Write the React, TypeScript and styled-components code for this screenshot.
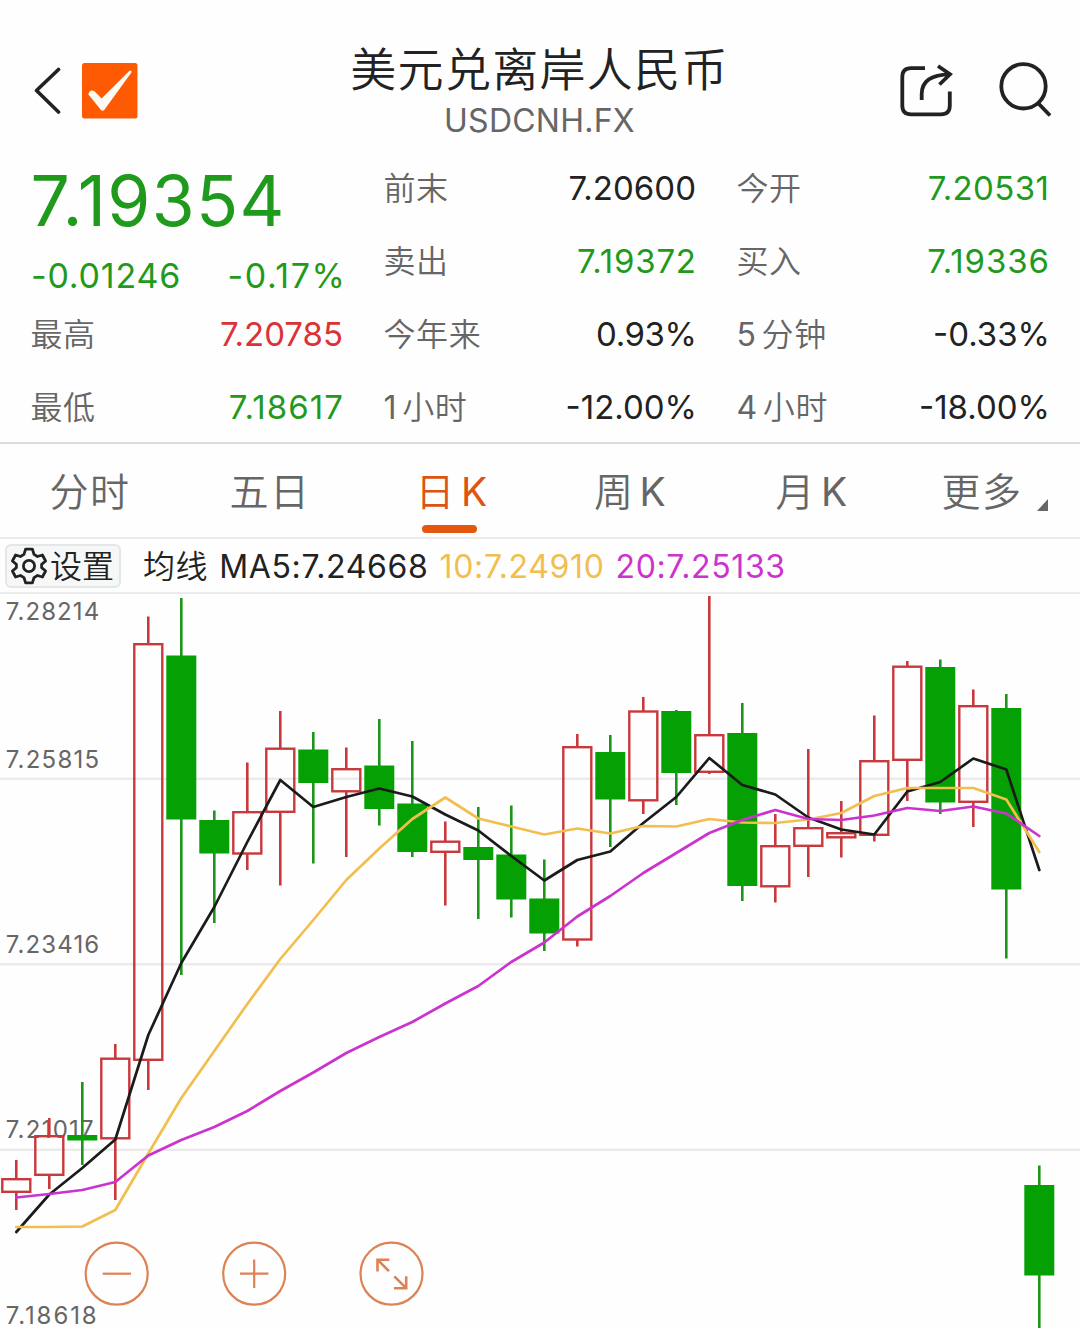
import React from "react";
import styled, { createGlobalStyle } from "styled-components";

const GREEN = "#1f9a1c";
const RED = "#dc3236";
const INK = "#222222";
const GREY = "#666666";

const GlobalStyle = createGlobalStyle`
  * { box-sizing: border-box; }
  body {
    margin: 0;
    background: #fefefe;
    font-family: Inter, "Noto Sans CJK SC", sans-serif;
    -webkit-font-smoothing: antialiased;
  }
`;

const Page = styled.main`
  width: 1080px;
  height: 1328px;
  overflow: hidden;
  display: flex;
  flex-direction: column;
  background: #fefefe;
  color: ${INK};
  white-space: nowrap;
`;

const Header = styled.header`
  height: 152px;
  padding: 28px 28px 0 32px;
  display: grid;
  grid-template-columns: 200px 1fr 155px;
  align-items: center;
`;

const HeaderGroup = styled.div<{ $gap: number; $end?: boolean }>`
  display: flex;
  align-items: center;
  gap: ${(p) => p.$gap}px;
  justify-content: ${(p) => (p.$end ? "flex-end" : "flex-start")};
`;

const TitleBlock = styled.div`
  display: flex;
  flex-direction: column;
  align-items: center;
  padding: 2px 50px 0 0;
`;

const Title = styled.h1`
  margin: 0;
  font-size: 46px;
  font-weight: 350;
  line-height: 56px;
  letter-spacing: 1.3px;
`;

const Ticker = styled.div`
  font-size: 32px;
  line-height: 40px;
  letter-spacing: 0.25px;
  color: ${GREY};
  margin-top: 4px;
`;

const Quotes = styled.section`
  height: 292px;
  padding: 0 31px;
  display: grid;
  grid-template-columns: repeat(3, 312px);
  justify-content: space-between;
  border-bottom: 2px solid #dcdcdc;
`;

const QuoteColumn = styled.div`
  display: flex;
  flex-direction: column;
`;

const QuoteRow = styled.div`
  height: 73px;
  display: flex;
  align-items: center;
  justify-content: space-between;
  font-size: 32px;
`;

const Label = styled.span`
  color: ${GREY};
  font-weight: 350;
  letter-spacing: 0.6px;
  margin-left: -0.5px;
  padding-bottom: 6px;
`;

const Count = styled.span`
  font-weight: 400;
  margin-right: 5px;
`;

const Value = styled.span<{ $color?: string; $spacing: number; $percent: boolean }>`
  color: ${(p) => p.$color ?? INK};
  font-size: 33px;
  padding-bottom: 1px;
  letter-spacing: ${(p) => p.$spacing}px;
  margin-right: ${(p) => -p.$spacing - (p.$percent ? 1 : 0)}px;
`;

const LastPrice = styled.div`
  height: 97px;
  margin-left: -0.5px;
  display: flex;
  align-items: center;
  font-size: 69.5px;
  letter-spacing: 1.3px;
  color: ${GREEN};
`;

const ChangeRow = styled.div`
  height: 49px;
  padding-top: 3px;
  display: flex;
  align-items: center;
  justify-content: space-between;
`;

const Change = styled.span<{ $spacing: number }>`
  font-size: 34px;
  letter-spacing: ${(p) => p.$spacing}px;
  margin-right: ${(p) => -p.$spacing - 2}px;
  color: ${GREEN};
`;

const Tabs = styled.nav`
  height: 95px;
  display: grid;
  grid-template-columns: repeat(6, 180px);
  border-bottom: 2px solid #ebebeb;
`;

const Tab = styled.div<{ $active?: boolean; $shift?: number }>`
  position: relative;
  display: flex;
  align-items: center;
  justify-content: center;
  gap: 5px;
  padding-left: ${(p) => p.$shift ?? 0}px;
  font-size: 39px;
  letter-spacing: 1.5px;
  color: ${(p) => (p.$active ? "#dc5413" : GREY)};
`;

const Han = styled.span`
  font-weight: 350;
  padding-bottom: 4px;
`;

const Latin = styled.span`
  padding-top: 1px;
`;

const TabMark = styled.span`
  position: absolute;
  left: 62px;
  bottom: 4px;
  width: 55px;
  height: 8px;
  border-radius: 4px;
  background: #e4570f;
`;

const Legend = styled.section`
  height: 55px;
  padding-left: 5px;
  display: flex;
  align-items: center;
  font-size: 32px;
  border-bottom: 2px solid #ebebeb;
`;

const Settings = styled.button`
  width: 116px;
  height: 44px;
  margin: 0 22px 0 0;
  padding: 0 0 0 3px;
  display: flex;
  align-items: center;
  gap: 2px;
  border: 2px solid #e4e6e7;
  border-radius: 6px;
  background: #f6f8f8;
  font: inherit;
  color: ${INK};
`;

const LegendItem = styled.span<{ $color?: string }>`
  color: ${(p) => p.$color ?? INK};
  margin-right: 11px;
  padding-top: 2px;
  letter-spacing: 0.65px;
`;

const LegendName = styled(Han)`
  margin-right: 11px;
  padding-bottom: 3px;
  letter-spacing: 0.6px;
`;

const Chart = styled.svg`
  display: block;
  flex: none;
`;

type Candle = [up: boolean, high: number, top: number, bottom: number, low: number];

const candles: Candle[] = [
  [true, 1160, 1178, 1193, 1210],
  [true, 1118, 1135, 1176, 1189],
  [false, 1082, 1135, 1140.5, 1165],
  [true, 1044, 1057.5, 1139.5, 1200],
  [true, 616.5, 643, 1061, 1090],
  [false, 598, 655.5, 819.5, 975],
  [false, 810.5, 820, 853.5, 923],
  [true, 762.5, 811, 854.7, 870],
  [true, 711, 747.5, 813, 885.5],
  [false, 732, 749.5, 783, 863.5],
  [true, 747.5, 768, 792.5, 857],
  [false, 719, 765.5, 809, 825.5],
  [false, 741, 803.5, 852, 857],
  [true, 821.5, 840.5, 853, 905.5],
  [false, 807, 847, 860, 919],
  [false, 805.5, 854.5, 899.5, 917.5],
  [false, 859.5, 898.5, 933.5, 951],
  [true, 734, 746, 940.7, 946.5],
  [false, 735, 752, 799.5, 847],
  [true, 697, 710.3, 801.5, 814],
  [false, 710, 711, 773, 805],
  [true, 596, 734, 773, 774],
  [false, 703, 733, 886, 901],
  [true, 814, 845, 887.5, 902.5],
  [true, 749, 827, 847, 877],
  [true, 801, 832, 838.5, 857.5],
  [true, 715.5, 760, 836, 841.5],
  [true, 661, 665.5, 761, 801],
  [false, 659.5, 667, 802.5, 814],
  [true, 689.5, 705, 803, 827],
  [false, 694, 708, 889.5, 958.5],
  [false, 1165.5, 1185, 1275.5, 1330],
];

const averages = [
  {
    color: "#1b1b1b",
    points: [
      1232, 1194.5, 1168, 1139.5, 1035, 963, 907, 842, 780, 807, 797, 788.5, 796.5, 814.5, 830.5, 856,
      880.5, 860, 851.5, 823, 797, 758, 785, 794.5, 817.5, 829.5, 834.5, 791.5, 782, 758.5, 769.5, 870,
    ],
  },
  {
    color: "#f2be4e",
    points: [
      1227, 1227, 1226.5, 1210, 1153.5, 1098, 1051, 1004, 959, 920, 880, 848.5, 819, 797.5, 818.5, 826.5,
      834.5, 828.5, 833.5, 826, 826.5, 819, 822.5, 823, 819.5, 813, 796, 788, 788, 788, 799.5, 852,
    ],
  },
  {
    color: "#cb33cf",
    points: [
      1197.5, 1194, 1190, 1182, 1155.5, 1140, 1127, 1111, 1091, 1072.5, 1053, 1037, 1022, 1003.5, 986,
      962, 942.5, 916.5, 896, 873, 853, 833, 820, 810, 819, 820, 815.5, 808, 811, 806.5, 813.5, 836,
    ],
  },
];

const axis = [
  { text: "7.28214", y: 620, width: 93.5 },
  { text: "7.25815", y: 767.5, width: 93.5 },
  { text: "7.23416", y: 952.5, width: 93.5 },
  { text: "7.21017", y: 1138, width: 88 },
  { text: "7.18618", y: 1323.5, width: 91 },
];

const AxisText = styled.text`
  font-size: 24px;
  fill: ${GREY};
`;

const centre = (i: number) => 16.3 + i * 33;

function CandleShape({ index, data }: { index: number; data: Candle }) {
  const [up, high, top, bottom, low] = data;
  const x = centre(index);
  const color = up ? "#c8393d" : "#05a104";
  const wick = up ? color : "#1b961b";
  return (
    <g>
      <path
        d={`M${x} ${high}V${top + 1}M${x} ${bottom - 1}V${low}`}
        stroke={wick}
        strokeWidth={2.6}
      />
      {up ? (
        <rect
          x={x - 14}
          y={top + 1.2}
          width={28}
          height={bottom - top - 2.4}
          fill="none"
          stroke={color}
          strokeWidth={2.4}
        />
      ) : (
        <rect x={x - 15} y={top} width={30} height={bottom - top} fill={color} />
      )}
    </g>
  );
}

function ChartPanel() {
  return (
    <Chart width="1080" height="734" viewBox="0 594 1080 734">
      {[778.7, 964.2, 1149.7].map((y) => (
        <path key={y} d={`M0 ${y}H1080`} stroke="#ebebeb" strokeWidth={2.4} />
      ))}
      {axis.map((a) => (
        <AxisText key={a.text} x={5.7} y={a.y} textLength={a.width}>
          {a.text}
        </AxisText>
      ))}
      {candles.map((c, i) => (
        <CandleShape key={i} index={i} data={c} />
      ))}
      {averages.map((a) => (
        <polyline
          key={a.color}
          points={a.points.map((y, i) => `${centre(i)},${y}`).join(" ")}
          fill="none"
          stroke={a.color}
          strokeWidth={2.7}
          strokeLinejoin="round"
          strokeLinecap="round"
        />
      ))}
      <g fill="none" stroke="#dd8255" strokeWidth={2.2}>
        <circle cx="116.7" cy="1273.7" r="31" />
        <path d="M102.7 1273.7H131" />
        <circle cx="254.2" cy="1273.7" r="31" />
        <path d="M240 1273.7H268.4M254.2 1259.5V1288" />
        <circle cx="391.5" cy="1273.7" r="31" />
        <path d="M377.5 1271.5V1259.7H389.3M377.5 1259.7L389 1271.2" strokeWidth="2.6" />
        <path d="M406.2 1276.3V1288.2H394M406.2 1288.2L394.3 1276.3" strokeWidth="2.6" />
      </g>
    </Chart>
  );
}

const BackIcon = () => (
  <svg width="30" height="48" viewBox="32 66 30 48" fill="none">
    <path
      d="M58.5 69.5L36.5 90.5L58.5 112"
      stroke={INK}
      strokeWidth="3.6"
      strokeLinecap="round"
      strokeLinejoin="round"
    />
  </svg>
);

const CheckIcon = () => (
  <svg width="56" height="58" viewBox="82 61 56 58">
    <rect x="82" y="63" width="55.5" height="55.5" rx="2.5" fill="#fd5a03" />
    <path
      d="M88.2 94.2Q90 88.6 94.5 91.2L101.6 98.6L129 71.2Q131.8 69.3 131.6 72.2L104.6 109.6Q102.7 112 100.6 109.6Z"
      fill="#fffaf3"
    />
  </svg>
);

const ShareIcon = () => (
  <svg width="54" height="54" viewBox="899 63 54 54" fill="none" stroke={INK} strokeWidth="3.8">
    <path d="M925 68.2H911Q902.3 68.2 902.3 77V105.5Q902.3 114.3 911 114.3H941Q949.8 114.3 949.8 105.5V91.5" />
    <path d="M921.7 100V94C921.7 81 932 74.5 950 74.3" />
    <path d="M938 66L950 74.3L939.5 84.5" />
  </svg>
);

const SearchIcon = () => (
  <svg width="54" height="58" viewBox="998 61 54 58" fill="none" stroke={INK} strokeWidth="3.8">
    <circle cx="1023.5" cy="86.3" r="22.2" />
    <path d="M1038 103L1050 115.5" />
  </svg>
);

const GearIcon = () => (
  <svg
    width="38"
    height="40"
    viewBox="-19 -20 38 40"
    fill="none"
    stroke={INK}
    strokeWidth="2.8"
    strokeLinejoin="round"
  >
    <path d="M-3.4 -16.8H3.4L5 -11.6L8.5 -9.5L13.4 -11L16.6 -5L12.6 -1.7V1.7L16.6 5L13.4 11L8.5 9.5L5 11.6L3.4 16.8H-3.4L-5 11.6L-8.5 9.5L-13.4 11L-16.6 5L-12.6 1.7V-1.7L-16.6 -5L-13.4 -11L-8.5 -9.5L-5 -11.6Z" />
    <circle r="5.6" />
  </svg>
);

const Corner = styled.svg`
  margin: 28px 0 0 9px;
`;

interface Quote {
  count?: string;
  label: string;
  value: string;
  spacing: number;
  color?: string;
}

const left: Quote[] = [
  { label: "最高", value: "7.20785", spacing: 0, color: RED },
  { label: "最低", value: "7.18617", spacing: 1.1, color: GREEN },
];
const middle: Quote[] = [
  { label: "前末", value: "7.20600", spacing: 0.05 },
  { label: "卖出", value: "7.19372", spacing: 0.8, color: GREEN },
  { label: "今年来", value: "0.93%", spacing: -0.4 },
  { count: "1", label: "小时", value: "-12.00%", spacing: 0 },
];
const right: Quote[] = [
  { label: "今开", value: "7.20531", spacing: 0.4, color: GREEN },
  { label: "买入", value: "7.19336", spacing: 0.9, color: GREEN },
  { count: "5", label: "分钟", value: "-0.33%", spacing: 0 },
  { count: "4", label: "小时", value: "-18.00%", spacing: 0 },
];

const QuoteRows = ({ rows }: { rows: Quote[] }) => (
  <>
    {rows.map((q) => (
      <QuoteRow key={q.value}>
        <Label>
          {q.count && <Count>{q.count}</Count>}
          {q.label}
        </Label>
        <Value $color={q.color} $spacing={q.spacing} $percent={q.value.endsWith("%")}>
          {q.value}
        </Value>
      </QuoteRow>
    ))}
  </>
);

export default function App() {
  return (
    <Page>
      <GlobalStyle />
      <Header>
        <HeaderGroup $gap={20}>
          <BackIcon />
          <CheckIcon />
        </HeaderGroup>
        <TitleBlock>
          <Title>美元兑离岸人民币</Title>
          <Ticker>USDCNH.FX</Ticker>
        </TitleBlock>
        <HeaderGroup $gap={45} $end>
          <ShareIcon />
          <SearchIcon />
        </HeaderGroup>
      </Header>
      <Quotes>
        <QuoteColumn>
          <LastPrice>7.19354</LastPrice>
          <ChangeRow>
            <Change $spacing={0.8}>-0.01246</Change>
            <Change $spacing={1.6}>-0.17%</Change>
          </ChangeRow>
          <QuoteRows rows={left} />
        </QuoteColumn>
        <QuoteColumn>
          <QuoteRows rows={middle} />
        </QuoteColumn>
        <QuoteColumn>
          <QuoteRows rows={right} />
        </QuoteColumn>
      </Quotes>
      <Tabs>
        <Tab>
          <Han>分时</Han>
        </Tab>
        <Tab>
          <Han>五日</Han>
        </Tab>
        <Tab $active $shift={4}>
          <Han>日</Han>
          <Latin>K</Latin>
          <TabMark />
        </Tab>
        <Tab $shift={1}>
          <Han>周</Han>
          <Latin>K</Latin>
        </Tab>
        <Tab $shift={4}>
          <Han>月</Han>
          <Latin>K</Latin>
        </Tab>
        <Tab $shift={9}>
          <Han>更多</Han>
          <Corner width="11" height="12" viewBox="0 0 11 12">
            <path d="M11 0V12H0Z" fill={GREY} />
          </Corner>
        </Tab>
      </Tabs>
      <Legend>
        <Settings>
          <GearIcon />
          <Han>设置</Han>
        </Settings>
        <LegendName>均线</LegendName>
        <LegendItem>MA5:7.24668</LegendItem>
        <LegendItem $color="#f2be4e">10:7.24910</LegendItem>
        <LegendItem $color="#cb33cf">20:7.25133</LegendItem>
      </Legend>
      <ChartPanel />
    </Page>
  );
}
